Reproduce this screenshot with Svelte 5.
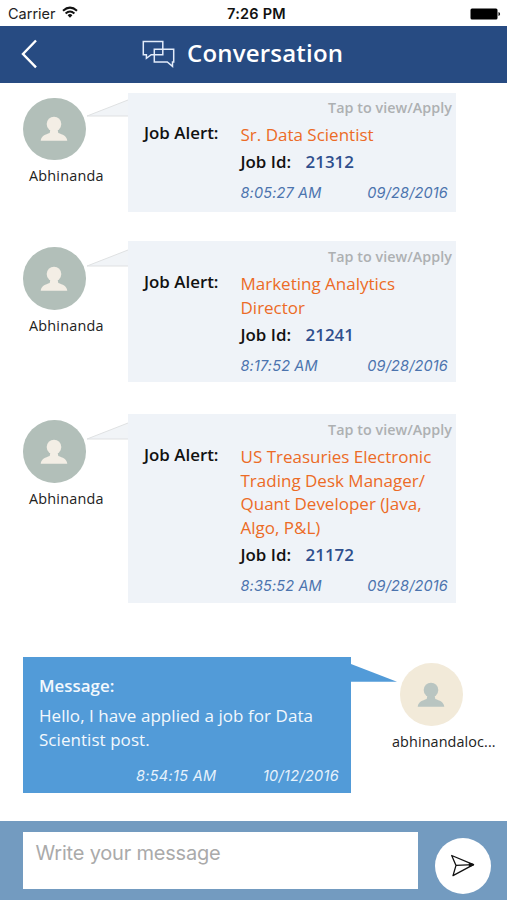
<script>
  const alerts = [
    { title: ['Sr. Data Scientist'], id: '21312', time: '8:05:27 AM', date: '09/28/2016', gap: 10.2, height: 119, inset: 0 },
    { title: ['Marketing Analytics', 'Director'], id: '21241', time: '8:17:52 AM', date: '09/28/2016', gap: 29.3, height: 140.7, inset: 1.5 },
    {
      title: ['US Treasuries Electronic', 'Trading Desk Manager/', 'Quant Developer (Java,', 'Algo, P&L)'],
      id: '21172', time: '8:35:52 AM', date: '09/28/2016', gap: 32.7, height: 188.3, inset: 1
    }
  ];
</script>

{#snippet person()}
  <svg class="person" width="28" height="26" viewBox="0 0 28 26">
    <circle cx="14" cy="8" r="7.3" />
    <path d="M0.7 24.7C1.2 20 5.5 18.6 9.7 17.1L10.5 13h7l.8 4.1c4.2 1.5 8.5 2.9 9 7.6z" />
  </svg>
{/snippet}

<div class="screen">
  <div class="status">
    <div class="carrier">
      <span>Carrier</span>
      <svg width="16" height="13" viewBox="0 0 16 13" fill="none" stroke="#111" stroke-width="2">
        <path d="M1 4.7Q8-1.5 15 4.7" />
        <path d="M3.6 7.5Q8 3.4 12.4 7.5" />
        <path d="M5.6 9.2Q8 7 10.4 9.2L8 11.7z" fill="#111" stroke="none" />
      </svg>
    </div>
    <span class="clock">7:26 PM</span>
    <svg class="battery" width="31" height="12" viewBox="0 0 31 12">
      <rect x="0.5" y="0.5" width="27" height="11" rx="1.5" />
      <path d="M28.5 4q1.6.5 1.6 2t-1.6 2z" />
    </svg>
  </div>

  <header>
    <svg class="back" width="18" height="30" viewBox="0 0 18 30" fill="none" stroke="#fff" stroke-width="2.4">
      <path d="M16 1.5L3 15l13 13.3" />
    </svg>
    <svg class="chats" width="34" height="28" viewBox="0 0 34 28" fill="none" stroke="#e3ecfa" stroke-width="1.5">
      <path d="M1.3 1.5H20.8V14.7H9.2L4.4 18.3V14.7H1.3z" />
      <path d="M12.3 9.3H31.7V22H30.5V26.3L25.3 22H12.3z" />
    </svg>
    <h1>Conversation</h1>
  </header>

  <main>
    {#each alerts as a}
      <section class="row" style="margin-top: {a.gap}px; --inset: {a.inset}px">
        <div class="user">
          <div class="avatar">{@render person()}</div>
          <span class="name">Abhinanda</span>
        </div>
        <svg class="tail" width="42" height="20" viewBox="0 0 42 20">
          <path d="M42 1L1 17H42" fill="#f1f4f7" stroke="#dfe1e2" />
        </svg>
        <article class="card" style="height: {a.height}px">
          <span class="tap">Tap to view/Apply</span>
          <div class="body">
            <span class="label">Job Alert:</span>
            <div class="details">
              <div class="title">
                {#each a.title as line}<span>{line}</span>{/each}
              </div>
              <div class="job"><span>Job Id:</span><b>{a.id}</b></div>
              <div class="stamp"><span>{a.time}</span><span>{a.date}</span></div>
            </div>
          </div>
        </article>
      </section>
    {/each}

    <section class="row own">
      <article class="message">
        <span class="heading">Message:</span>
        <p>Hello, I have applied a job for Data<br />Scientist post.</p>
        <div class="stamp"><span>8:54:15 AM</span><span>10/12/2016</span></div>
      </article>
      <svg class="tail" width="48" height="20" viewBox="0 0 48 20">
        <path d="M0 0L46 17.7H0z" fill="#529bd8" />
      </svg>
      <div class="user">
        <div class="avatar">{@render person()}</div>
        <span class="name">abhinandaloc...</span>
      </div>
    </section>
  </main>

  <footer>
    <div class="input">Write your message</div>
    <div class="send">
      <svg width="26" height="24" viewBox="0 0 26 24" fill="none" stroke="#111" stroke-width="1.3" stroke-linejoin="round">
        <path d="M1.7 1.5L23.5 10.6L3 21.6L6 11.4z" />
        <path d="M6 11.4L23.5 10.6" />
        <path d="M19.5 9.3l4 1.3-4 1.7z" fill="#111" />
      </svg>
    </div>
  </footer>
</div>

<style>
  :global(body) { margin: 0; background: #fff; }
  .screen {
    width: 507px; height: 900px; display: flex; flex-direction: column; overflow: hidden;
    background: #fff; font-family: "Open Sans", "Noto Sans", sans-serif; white-space: nowrap;
  }
  svg { display: block; flex: none; }
  .status {
    height: 25.5px; flex: none; box-sizing: border-box; display: grid; grid-template-columns: 1fr auto 1fr;
    align-items: center; padding: 2px 6px 0 8px; font: 14.5px/20px Inter, sans-serif; color: #222;
  }
  .carrier { display: flex; align-items: center; gap: 6px; }
  .carrier svg { margin-top: -3px; }
  .clock { font-weight: 600; font-size: 14.5px; letter-spacing: 0.25px; color: #111; margin-left: 4px; }
  .battery { justify-self: end; }
  header {
    height: 57px; flex: none; display: flex; align-items: center; background: #274b82; color: #fff;
  }
  .back { margin-left: 20px; }
  .chats { margin-left: 104px; }
  h1 { margin: -3px 0 0 11px; font-size: 24px; line-height: 32px; font-weight: 600; letter-spacing: 0.2px; }
  main { flex: 1; }
  .row { display: flex; align-items: flex-start; }
  .user {
    width: 63px; flex: none; box-sizing: border-box; display: flex; flex-direction: column;
    padding-top: calc(5px + var(--inset, 0px)); margin-left: 23px;
  }
  .avatar {
    width: 62.5px; height: 62.5px; border-radius: 50%; background: #b2bfb9; display: flex;
    align-items: center; justify-content: center;
  }
  .person { fill: #f3eee5; }
  .name { font-size: 14.4px; line-height: 20px; margin: 6px 0 0 6px; color: #222; letter-spacing: 0.2px; }
  .tail { margin-top: calc(6.5px + var(--inset, 0px)); }
  .card {
    width: 328px; flex: none; background: #eff3f8; padding-top: var(--inset, 0px); box-sizing: border-box;
    display: flex; flex-direction: column;
  }
  .tap {
    align-self: flex-end; margin-right: 4px; font-size: 14.3px; font-weight: 600; line-height: 29px;
    color: #adb0b2; letter-spacing: 0.05px;
  }
  .body { display: flex; padding: 0 8px 0 16px; }
  .label { width: 96.5px; font-size: 16.9px; line-height: 22px; font-weight: 600; color: #111; }
  .details { flex: 1; }
  .title { color: #ec6b26; font-size: 17px; line-height: 23.4px; display: flex; flex-direction: column; padding-top: 1px; }
  .job { display: flex; gap: 14.5px; margin-top: 4px; font-size: 16.9px; line-height: 24px; font-weight: 600; color: #111; }
  .job b { font-weight: 600; color: #2f4f8d; }
  .stamp {
    display: flex; justify-content: space-between; margin-top: 9px; font: italic 14.5px/20px Inter, sans-serif;
    color: #4c74ae; letter-spacing: 0.15px;
  }
  .own { margin-top: 54.6px; }
  .message {
    margin-left: 23px; width: 328px; height: 135.5px; flex: none; box-sizing: border-box; background: #529bd8;
    color: #f2f8fd; padding: 17px 12px 0 16px;
  }
  .heading { display: block; font-size: 16.9px; line-height: 24px; font-weight: 600; }
  .message p { margin: 6px 0 0; font-size: 17px; line-height: 23.4px; letter-spacing: 0.05px; }
  .message .stamp { margin: 15px 0 0 97px; color: #e6f2fc; letter-spacing: 0.3px; }
  .own .user { margin-left: 1px; padding-top: 6px; }
  .own .avatar { background: #f2ead9; }
  .own .person { fill: #b9c5c1; }
  .own .name { margin-left: -8px; margin-top: 6px; letter-spacing: 0.1px; }
  footer {
    height: 79.5px; flex: none; box-sizing: border-box; background: #739bc0; display: flex; align-items: flex-start;
    padding: 11px 16px 0 22.5px; justify-content: space-between;
  }
  .input {
    width: 395.5px; height: 57.5px; box-sizing: border-box; background: #fff; color: #aaa; padding: 7px 13px;
    font: 20px/29px Inter, sans-serif; letter-spacing: -0.2px;
  }
  .send {
    width: 56px; height: 56px; margin-top: 6px; border-radius: 50%; background: #fff; display: flex;
    align-items: center; justify-content: center;
  }
</style>
